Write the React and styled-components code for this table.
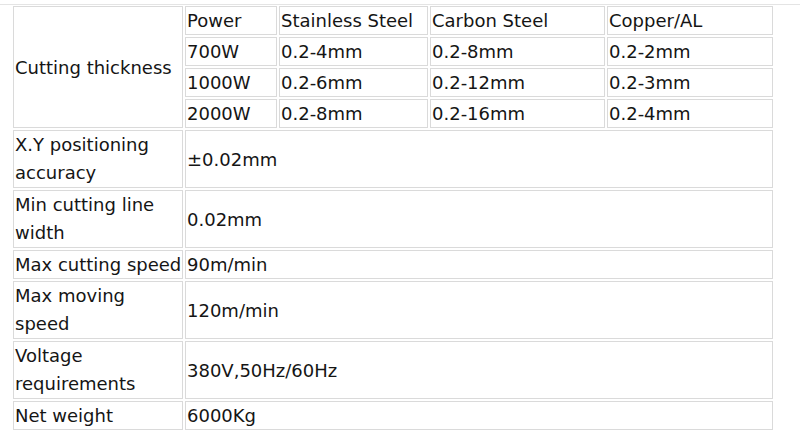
import React from "react";
import styled, { createGlobalStyle } from "styled-components";

const Global = createGlobalStyle`
  html, body { margin: 0; padding: 0; background: #fff; }
  body { font-family: "DejaVu Sans", Verdana, sans-serif; color: #151515; }
`;

const Page = styled.div`
  padding-top: 4px;
  overflow: hidden;
  width: 800px;
  height: 434px;
`;

const Frame = styled.div`
  border-top: 1px solid #e4e4e4;
  padding-left: 11px;
`;

const Table = styled.table`
  border-collapse: separate;
  border-spacing: 2px;
  table-layout: fixed;
  width: 764px;
  margin-top: -1px;
  font-size: 18px;
`;

const Cell = styled.td`
  border: 1px solid #dadada;
  padding: 0 1px;
  line-height: ${(p) => p.$lh || 27}px;
  vertical-align: middle;
  white-space: ${(p) => (p.$nowrap ? "nowrap" : "normal")};
  overflow: hidden;
`;

const cols = [170, 92, 149, 175, 166];

const thickness = [
  ["Power", "Stainless Steel", "Carbon Steel", "Copper/AL"],
  ["700W", "0.2-4mm", "0.2-8mm", "0.2-2mm"],
  ["1000W", "0.2-6mm", "0.2-12mm", "0.2-3mm"],
  ["2000W", "0.2-8mm", "0.2-16mm", "0.2-4mm"],
];

const specs = [
  ["X.Y positioning accuracy", "±0.02mm"],
  ["Min cutting line width", "0.02mm"],
  ["Max cutting speed", "90m/min", true],
  ["Max moving speed", "120m/min"],
  ["Voltage requirements", "380V,50Hz/60Hz"],
  ["Net weight", "6000Kg", true],
];

export default function App() {
  return (
    <Page>
      <Global />
      <Frame>
        <Table>
          <colgroup>
            {cols.map((w, i) => (
              <col key={i} style={{ width: w }} />
            ))}
          </colgroup>
          <tbody>
            {thickness.map((row, i) => (
              <tr key={i}>
                {i === 0 && <Cell rowSpan={4}>Cutting thickness</Cell>}
                {row.map((c, j) => (
                  <Cell key={j} $nowrap>
                    {c}
                  </Cell>
                ))}
              </tr>
            ))}
            {specs.map(([label, value, single], i) => (
              <tr key={i}>
                <Cell $nowrap={single} $lh={single ? 27 : 28}>{label}</Cell>
                <Cell colSpan={4} $nowrap>
                  {value}
                </Cell>
              </tr>
            ))}
          </tbody>
        </Table>
      </Frame>
    </Page>
  );
}
